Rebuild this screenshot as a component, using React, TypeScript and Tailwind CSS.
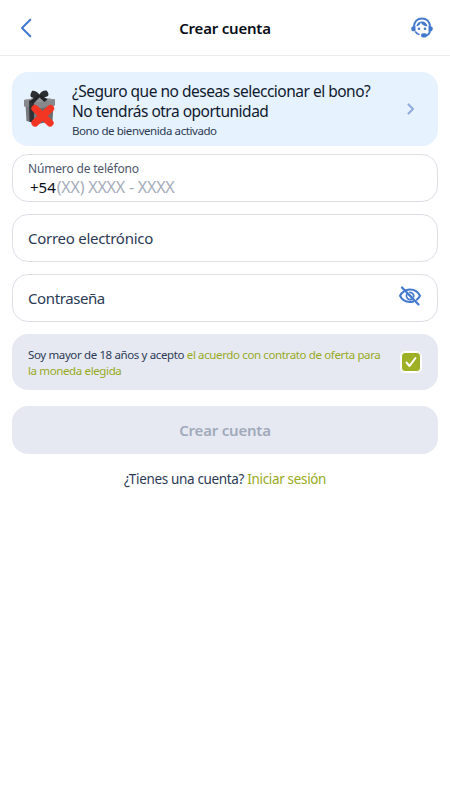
import { useState } from "react";
import type { ReactNode } from "react";

/* ------------------ ICONS ------------------ */
function BackIcon() {
  return (
    <svg width="12" height="20" viewBox="0 0 12 20" fill="none">
      <path d="M10.300 1.700 2 10l8.300 8.300" stroke="#4379cd" strokeWidth="2" strokeLinecap="round" strokeLinejoin="round" />
    </svg>
  );
}

function SupportIcon() {
  return (
    <svg width="24" height="24" viewBox="0 0 24 24" fill="none">
      <path d="M4 10.800C4.200 5.500 7.500 2.500 12 2.500s7.800 3 8 8.300" stroke="#4379cd" strokeWidth="2.200" />
      <path d="M5.500 10.200H3.500C2.100 10.200 1.200 11.200 1.200 12.700s.9 2.600 2.300 2.600h2zM18.500 10.200h2c1.400 0 2.300 1 2.300 2.500s-.9 2.600-2.300 2.600h-2z" fill="#4379cd" />
      <path d="M6.500 10.600C8.500 10 10.200 8.500 10.800 6.500c1.300 2.200 3.500 3.600 6.700 3.900-.4-3-2.600-5-5.500-5-3.200 0-5.500 2.100-5.500 5.200Z" fill="#4379cd" />
      <circle cx="9" cy="12.800" r="1.300" fill="#4379cd" />
      <circle cx="15" cy="12.800" r="1.300" fill="#4379cd" />
      <path d="M5.300 15.500c1 1.700 2.400 2.700 4.200 3.200" stroke="#4379cd" strokeWidth="1.500" />
      <path d="M20 14.500c-.2 3-1.800 4.800-5 5.100" stroke="#4379cd" strokeWidth="2" />
      <rect x="11" y="17.300" width="6" height="4.200" rx="2.100" fill="#4379cd" />
    </svg>
  );
}

function GiftIcon() {
  return (
    <svg width="36" height="40" viewBox="0 0 36 40">
      <path d="m3.500 16 13 2v17L4.500 32Z" fill="#77797c" />
      <path d="m16 18 15.500-2-1 16L16 35Z" fill="#6b6d70" />
      <path d="m2 11 14-2.500 17 1.800v6.200L17 19.500 2 17.500Z" fill="#86888b" />
      <path d="m2 11 14-2.500 17 1.800L17 13.500Z" fill="#939598" />
      <path d="m7 11.500 5 .8V34l-4.500-1.200Z" fill="#303134" />
      <path d="M17 8C14 10.500 9 9 8.500 7c-.3-1.700.7-3.500 1.500-5 2-.8 5.500 1.200 7.500 3.500C19 2 23.500.8 25 2c1.300 1.500 2 3.800 1 5-1.800 1.300-5.500 1.700-9 1Z" fill="#2d2e31" />
      <path d="m15.500 6 4.500.5 5.500 4-3 2.500-5-4.500-6 6-4-2Z" fill="#232427" />
      <path d="m13 19.500 15 14.500M28.500 19.500 13 34" stroke="#f33623" strokeWidth="7.200" strokeLinecap="round" />
    </svg>
  );
}

function EyeOffIcon() {
  return (
    <svg width="24" height="24" viewBox="0 0 24 24" fill="none">
      <path d="M8.100 6.300A12 12 0 0 1 12 5.600c4.500 0 8.100 2.200 10 6.200-.8 1.600-1.900 3-3.300 4M6 7.300c-1.700 1-3.100 2.500-4 4.500 1.900 4 5.500 6.200 10 6.200 1.200 0 2.300-.2 3.400-.5" stroke="#4379cd" strokeWidth="2" strokeLinecap="round" />
      <path d="M12 8.300a3.700 3.700 0 0 1 3.600 4.500M8.800 10.100a3.700 3.700 0 0 0 4.500 5.200M11.500 11l1.800 1.800" stroke="#4379cd" strokeWidth="1.800" strokeLinecap="round" />
      <path d="m4 3.500 16.500 17" stroke="#4379cd" strokeWidth="2.200" strokeLinecap="round" />
    </svg>
  );
}

/* ------------------ FIELD ------------------ */
function Field({ children }: { children: ReactNode }) {
  return (
    <div className="flex h-12 items-center justify-between rounded-2xl border border-[#dcdfe7] bg-white pl-[15px] pr-[15px]">
      {children}
    </div>
  );
}

/* ------------------ PAGE ------------------ */
export default function App() {
  const [accepted, setAccepted] = useState(true);

  return (
    <div className="min-h-screen bg-white font-['Noto_Sans',sans-serif] text-[#2c3a55]">
      <header className="grid h-14 grid-cols-3 items-center border-b border-[#ebecef] pl-5 pr-4">
        <button aria-label="Volver" className="w-3">
          <BackIcon />
        </button>
        <h1 className="-ml-3 whitespace-nowrap pl-2 pt-0.5 text-center text-[15px] font-semibold tracking-[-0.2px] text-[#080d17]">
          Crear cuenta
        </h1>
        <button aria-label="Soporte" className="justify-self-end">
          <SupportIcon />
        </button>
      </header>

      <main className="px-3 pt-4">
        <section className="flex h-[74px] items-center rounded-2xl bg-[#e7f2ff] pl-2.5 pr-[22px]">
          <GiftIcon />
          <div className="ml-3.5 flex-1 whitespace-nowrap pt-[3px]">
            <p className="text-[15.5px] leading-5 tracking-[-0.5px] text-[#101a2e]">
              ¿Seguro que no deseas seleccionar el bono?
              <br />
              No tendrás otra oportunidad
            </p>
            <p className="mt-px text-[11.5px] leading-[18px] tracking-[-0.42px]">Bono de bienvenida activado</p>
          </div>
          <svg width="10" height="14" viewBox="0 0 10 14" fill="none">
            <path d="m2.500 2.500 4.500 4.500-4.500 4.500" stroke="#91acde" strokeWidth="2.200" strokeLinecap="round" strokeLinejoin="round" />
          </svg>
        </section>

        <form className="mt-2 flex flex-col gap-3" onSubmit={(e) => e.preventDefault()}>
          <Field>
            <div className="whitespace-nowrap pt-0.5">
              <p className="text-xs leading-4 tracking-[-0.17px] text-[#4c566b]">Número de teléfono</p>
              <p className="flex text-[15px] leading-5">
                <span className="ml-0.5 mr-px text-[#080d17]">+54</span>
                <span className="text-base leading-5 tracking-[-0.2px] text-[#a4acba]">(XX) XXXX - XXXX</span>
              </p>
            </div>
          </Field>
          <Field>
            <span className="text-[15px] tracking-[-0.27px]">Correo electrónico</span>
          </Field>
          <Field>
            <span className="text-[15px] tracking-[-0.4px]">Contraseña</span>
            <button type="button" aria-label="Mostrar contraseña" className="mb-1">
              <EyeOffIcon />
            </button>
          </Field>

          <div className="flex h-14 items-center justify-between rounded-2xl bg-[#e6e9f1] pl-4 pr-[17px]">
            <p className="whitespace-nowrap pt-0.5 text-[11.5px] leading-4 tracking-[-0.37px]">
              Soy mayor de 18 años y acepto <a className="text-[#98aa22]">el acuerdo con contrato de oferta para</a>
              <br />
              <a className="text-[#98aa22]">la moneda elegida</a>
            </p>
            <button
              type="button"
              role="checkbox"
              aria-label="Acepto"
              aria-checked={accepted}
              onClick={() => setAccepted(!accepted)}
              className="grid size-5 place-items-center rounded border border-white bg-[#9eb026] outline outline-1 outline-white"
            >
              {accepted && (
                <svg width="12" height="12" viewBox="0 0 12 12" fill="none">
                  <path d="m1.500 6.500 3 3.500 6-8" stroke="white" strokeWidth="2" strokeLinecap="round" strokeLinejoin="round" />
                </svg>
              )}
            </button>
          </div>

          <button className="mt-1 h-12 rounded-2xl bg-[#e6e9f1] text-[15px] font-semibold tracking-[-0.2px] text-[#a0aabc]">
            Crear cuenta
          </button>
        </form>

        <p className="mt-[15px] text-center text-[13.5px] leading-5 tracking-[-0.34px]">
          ¿Tienes una cuenta? <a className="text-[#98aa22]">Iniciar sesión</a>
        </p>
      </main>
    </div>
  );
}
